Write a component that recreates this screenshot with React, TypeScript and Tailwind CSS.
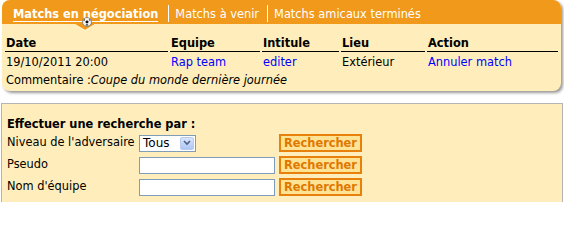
import React from "react";

const Ball = () => (
  <svg viewBox="0 0 10 10" className="absolute left-[80px] top-[17px] w-[10px] h-[10px]">
    <circle cx="5" cy="5" r="4.5" fill="#f4f4f4" stroke="#555" strokeWidth="0.6" />
    <polygon points="5,3.3 6.6,4.4 6,6.2 4,6.2 3.4,4.4" fill="#111" />
    <path d="M2.2,2 L3.2,3 L1.4,4.3 Z" fill="#222" />
    <path d="M7.8,2 L6.8,3 L8.6,4.3 Z" fill="#222" />
    <path d="M3.4,8.6 L4.2,7.2 L5.8,7.2 L6.6,8.6 Z" fill="#333" />
  </svg>
);

const SearchButton = () => (
  <button className="w-[83px] h-[18px] border-2 border-[#E8800C] bg-[#FFE394] text-[#E07800] font-bold leading-[14px] text-[11.4px]">
    Rechercher
  </button>
);

export default function App() {
  const font = "font-['DejaVu_Sans',Verdana,sans-serif] text-[11.4px]";
  return (
    <div className={`${font} w-[564px] h-[202px] overflow-hidden bg-white text-black`}>
      {/* Panel 1 */}
      <div className="relative ml-[2px] w-[559px] rounded-[8px] bg-[#FFEEBB] shadow-[2px_2px_3px_rgba(0,0,0,0.4)] pb-[2px]">
        <div className="flex items-start h-[24px] bg-[#F0991A] rounded-t-[8px] pl-[11px] pt-[5px] text-white">
          <span className="mt-[3px] leading-[13px] font-bold border-b border-white">Matchs en négociation</span>
          <span className="ml-[10px] mr-[6px] w-px h-[17px] bg-white" />
          <span className="mt-[3px] leading-[13px]">Matchs à venir</span>
          <span className="ml-[8px] mr-[6px] w-px h-[17px] bg-white" />
          <span className="mt-[3px] leading-[13px]">Matchs amicaux terminés</span>
        </div>
        <svg viewBox="0 0 20 7" className="absolute left-[73px] top-[24px] w-[20px] h-[7px]">
          <polygon points="0,0 10,6 20,0" fill="#F0991A" />
          <polyline points="0,0.5 10,6.5 20,0.5" fill="none" stroke="#FFF6DA" strokeWidth="0.8" />
        </svg>
        <Ball />
        <div className="pl-[3px] mt-[11px]">
          <div className="grid grid-cols-[163px_90px_77px_84px_131px] gap-x-[2px]">
            {["Date", "Equipe", "Intitule", "Lieu", "Action"].map((h) => (
              <div key={h} className="font-bold leading-[16px] pl-[1px] border-b border-black">{h}</div>
            ))}
          </div>
          <div className="grid grid-cols-[163px_90px_77px_84px_131px] gap-x-[2px] mt-[1px]">
            <div className="leading-[18px] pl-[1px]">19/10/2011 20:00</div>
            <div className="leading-[18px] pl-[1px] text-[#0000FF]">Rap team</div>
            <div className="leading-[18px] pl-[1px] text-[#0000FF]">editer</div>
            <div className="leading-[18px] pl-[1px]">Extérieur</div>
            <div className="leading-[18px] pl-[1px] text-[#0000FF]">Annuler match</div>
          </div>
          <div className="leading-[18px] pl-[1px]">
            Commentaire :<i>Coupe du monde dernière journée</i>
          </div>
        </div>
      </div>

      {/* Panel 2 */}
      <div className="mt-[12px] ml-[1px] w-[562px] h-[120px] border-t border-l border-r border-[#B4B4B4] bg-[#FFEEBB] pt-[12px] pl-[5px]">
        <div className="font-bold leading-[16px]">Effectuer une recherche par :</div>
        <div className="mt-[1px] grid grid-cols-[132px_140px_auto] gap-y-[2px] auto-rows-[20px] items-center">
          <div>Niveau de l'adversaire</div>
          <div>
            <div className="flex items-center w-[57px] h-[17px] bg-white border border-[#7F9DB9]">
              <span className="flex-1 pl-[3px] text-[12px] leading-[15px]">Tous</span>
              <span className="flex items-center justify-center w-[14px] h-[13px] mr-[1px] rounded-[2px] bg-gradient-to-b from-[#D9E5FB] to-[#AFC6F4] border border-[#B8CCF2]">
                <svg viewBox="0 0 8 6" className="w-[8px] h-[6px]">
                  <polyline points="1,1 4,4 7,1" fill="none" stroke="#4D6185" strokeWidth="1.6" />
                </svg>
              </span>
            </div>
          </div>
          <div><SearchButton /></div>
          <div>Pseudo</div>
          <div><div className="w-[136px] h-[17px] bg-white border border-[#7F9DB9]" /></div>
          <div><SearchButton /></div>
          <div>Nom d'équipe</div>
          <div><div className="w-[136px] h-[17px] bg-white border border-[#7F9DB9]" /></div>
          <div><SearchButton /></div>
        </div>
      </div>
    </div>
  );
}
